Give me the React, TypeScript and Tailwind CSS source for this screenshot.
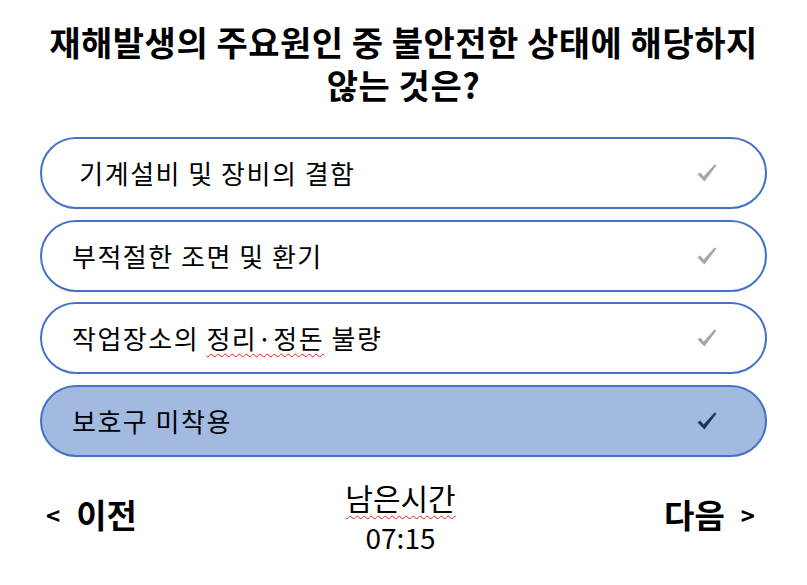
import React from "react";

const options = [
  { label: "\u00a0기계설비 및 장비의 결함", selected: false },
  { label: "부적절한 조면 및 환기", selected: false },
  { label: "작업장소의 정리·정돈 불량", selected: false, squiggle: true },
  { label: "보호구 미착용", selected: true },
];

function Check({ dark }: { dark: boolean }) {
  return (
    <svg width="20" height="18" viewBox="0 0 20 18" className={dark ? "text-[#1f3358]" : "text-[#a6a6a6]"}>
      <path d="M0.5 10.5 L3.2 8.6 L6.6 12.6 L17.6 0.5 L19.5 1.6 L7.4 17.5 Z" fill="currentColor" />
    </svg>
  );
}

function OptionLabel({ text, squiggle }: { text: string; squiggle?: boolean }) {
  if (!squiggle) return <span>{text}</span>;
  return (
    <span>
      작업장소의{" "}
      <span className="underline decoration-wavy decoration-[#e02020] decoration-1 underline-offset-4">정리·정돈</span>{" "}
      불량
    </span>
  );
}

export default function App() {
  return (
    <div
      className="w-[807px] h-[585px] bg-white text-black overflow-hidden"
      style={{ fontFamily: '"Noto Sans CJK KR", "Noto Sans", sans-serif' }}
    >
      <h1 className="pt-[20px] text-center text-[34px] font-bold leading-[43px] tracking-[0.5px]">
        재해발생의 주요원인 중 불안전한 상태에 해당하지
        <br />
        않는 것은?
      </h1>

      <div className="mt-[31px] px-[40px] flex flex-col gap-[10.5px]">
        {options.map((opt) => (
          <div
            key={opt.label}
            className={`h-[72px] rounded-full border-2 border-[#4472c4] flex items-center justify-between pl-[30px] pr-[48px] ${
              opt.selected ? "bg-[#a2b9e0]" : "bg-white"
            }`}
          >
            <div className="text-[26px] leading-none tracking-[1.5px]">
              <OptionLabel text={opt.label} squiggle={opt.squiggle} />
            </div>
            <Check dark={opt.selected} />
          </div>
        ))}
      </div>

      <div className="mt-[22px] pl-[46px] pr-[52px] flex items-start justify-between">
        <div className="pt-[18px] flex items-center gap-[16px] font-bold">
          <span className="text-[24px]">&lt;</span>
          <span className="text-[33px] leading-none">이전</span>
        </div>
        <div className="flex flex-col items-center">
          <span className="text-[30px] leading-[36px] underline decoration-wavy decoration-[#e02020] decoration-1 underline-offset-[5px]">
            남은시간
          </span>
          <span className="mt-[6px] text-[28px] leading-[32px]">07:15</span>
        </div>
        <div className="pt-[18px] flex items-center gap-[16px] font-bold">
          <span className="text-[33px] leading-none">다음</span>
          <span className="text-[24px]">&gt;</span>
        </div>
      </div>
    </div>
  );
}
